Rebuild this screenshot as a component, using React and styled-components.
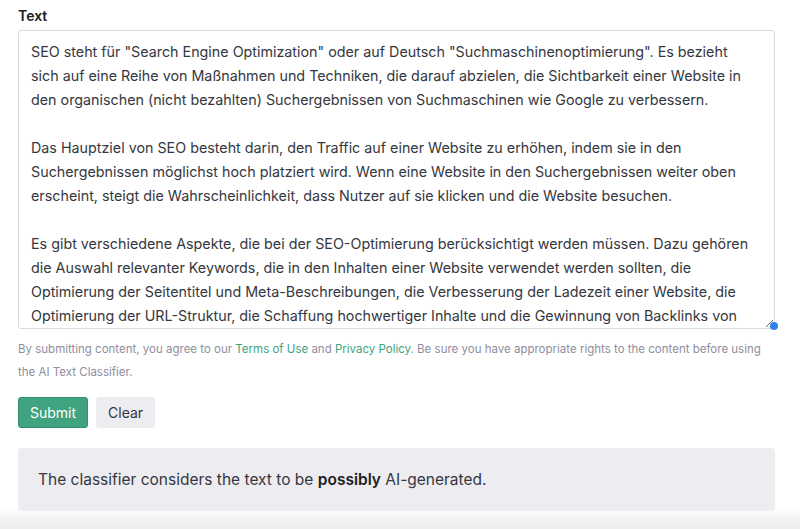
import React, { useState } from 'react';
import styled, { createGlobalStyle } from 'styled-components';

const GlobalStyle = createGlobalStyle`
  html, body {
    margin: 0;
    padding: 0;
    background: #ffffff;
  }
  body {
    font-family: 'Inter', 'Noto Sans', sans-serif;
    color: #353740;
  }
`;

const Page = styled.div`
  width: 800px;
  height: 529px;
  overflow: hidden;
  display: flex;
  flex-direction: column;
  background: linear-gradient(to bottom, #ffffff 0, #ffffff 508px, #f3f3f3 518px, #ededed 529px);
`;

const Content = styled.div`
  padding: 6px 25px 0 18px;
  display: flex;
  flex-direction: column;
`;

const Label = styled.label`
  font-size: 14px;
  font-weight: 600;
  color: #202123;
  line-height: 20px;
  margin-bottom: 4px;
`;

const FieldWrap = styled.div`
  position: relative;
`;

const TextArea = styled.textarea`
  display: block;
  box-sizing: border-box;
  width: 757px;
  height: 299px;
  padding: 9px 12px;
  border: 1px solid #d9d9e3;
  border-radius: 3px;
  font-family: 'Inter', 'Noto Sans', sans-serif;
  font-size: 14.3px;
  line-height: 24px;
  color: #353740;
  resize: vertical;
  outline: none;
  overflow: hidden;
  white-space: pre;
`;

const HandleDot = styled.span`
  position: absolute;
  right: -3px;
  bottom: -1px;
  width: 8px;
  height: 8px;
  border-radius: 50%;
  background: #2f80ed;
`;

const Disclaimer = styled.p`
  margin: 9px 0 0;
  font-size: 11.5px;
  line-height: 23px;
  color: #8e8ea0;
`;

const Link = styled.a`
  color: #3ea37e;
  text-decoration: none;
`;

const Actions = styled.div`
  display: flex;
  gap: 8px;
  margin-top: 13px;
`;

const Button = styled.button`
  box-sizing: border-box;
  height: 31px;
  padding: 0 11px;
  border-radius: 3px;
  font-family: 'Inter', 'Noto Sans', sans-serif;
  font-size: 14px;
  cursor: pointer;
  border: 1px solid ${p => (p.$primary ? '#2f8f6c' : '#ececf1')};
  background: ${p => (p.$primary ? '#3fa37f' : '#ececf1')};
  color: ${p => (p.$primary ? '#ffffff' : '#353740')};
`;

const Result = styled.div`
  box-sizing: border-box;
  margin-top: 20px;
  width: 757px;
  height: 63px;
  display: flex;
  align-items: center;
  padding: 0 20px;
  border-radius: 4px;
  background: #ececf1;
  font-size: 15.5px;
  color: #353740;
`;

const Strong = styled.b`
  font-weight: 600;
  color: #202123;
`;

const INITIAL = `SEO steht für "Search Engine Optimization" oder auf Deutsch "Suchmaschinenoptimierung". Es bezieht
sich auf eine Reihe von Maßnahmen und Techniken, die darauf abzielen, die Sichtbarkeit einer Website in
den organischen (nicht bezahlten) Suchergebnissen von Suchmaschinen wie Google zu verbessern.

Das Hauptziel von SEO besteht darin, den Traffic auf einer Website zu erhöhen, indem sie in den
Suchergebnissen möglichst hoch platziert wird. Wenn eine Website in den Suchergebnissen weiter oben
erscheint, steigt die Wahrscheinlichkeit, dass Nutzer auf sie klicken und die Website besuchen.

Es gibt verschiedene Aspekte, die bei der SEO-Optimierung berücksichtigt werden müssen. Dazu gehören
die Auswahl relevanter Keywords, die in den Inhalten einer Website verwendet werden sollten, die
Optimierung der Seitentitel und Meta-Beschreibungen, die Verbesserung der Ladezeit einer Website, die
Optimierung der URL-Struktur, die Schaffung hochwertiger Inhalte und die Gewinnung von Backlinks von
anderen Websites.`;

export default function App() {
  const [text, setText] = useState(INITIAL);

  return (
    <Page>
      <GlobalStyle />
      <Content>
        <Label htmlFor="classifier-text">Text</Label>
        <FieldWrap>
          <TextArea
            id="classifier-text"
            value={text}
            onChange={e => setText(e.target.value)}
          />
          <HandleDot />
        </FieldWrap>
        <Disclaimer>
          By submitting content, you agree to our <Link href="#">Terms of Use</Link> and{' '}
          <Link href="#">Privacy Policy</Link>. Be sure you have appropriate rights to the content before using
          the AI Text Classifier.
        </Disclaimer>
        <Actions>
          <Button $primary>Submit</Button>
          <Button onClick={() => setText('')}>Clear</Button>
        </Actions>
        <Result>
          <span>
            The classifier considers the text to be <Strong>possibly</Strong> AI-generated.
          </span>
        </Result>
      </Content>
    </Page>
  );
}
